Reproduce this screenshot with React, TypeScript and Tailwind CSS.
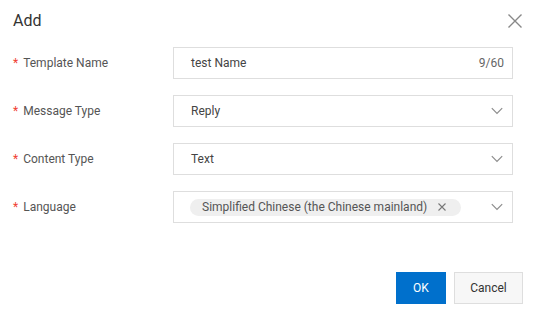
const font = { fontFamily: "Roboto, 'Liberation Sans', sans-serif" };

function Chevron() {
  return (
    <svg width="12" height="8" viewBox="0 0 12 8" className="text-[#8c8c8c]">
      <path d="M0.8 1.2 L6 6.4 L11.2 1.2" fill="none" stroke="currentColor" strokeWidth="1.2" />
    </svg>
  );
}

function Cross({ size, stroke, color }: { size: number; stroke: number; color: string }) {
  return (
    <svg width={size} height={size} viewBox={`0 0 ${size} ${size}`} style={{ color }}>
      <path d={`M0.5 0.5 L${size - 0.5} ${size - 0.5} M${size - 0.5} 0.5 L0.5 ${size - 0.5}`} stroke="currentColor" strokeWidth={stroke} fill="none" />
    </svg>
  );
}

function Label({ text }: { text: string }) {
  return (
    <div className="flex w-[173px] items-center pl-[13px] text-[12px] text-[#555555]">
      <span className="mr-[5px] text-[#f04134]">*</span>
      {text}
    </div>
  );
}

function Select({ children }: { children: React.ReactNode }) {
  return (
    <div className="flex h-[32px] w-[340px] items-center border border-[#dedede] bg-white pl-[17px] pr-[9px] text-[12px] text-[#444444]">
      <div className="flex flex-1 items-center">{children}</div>
      <Chevron />
    </div>
  );
}

export default function App() {
  return (
    <div className="h-[313px] w-[540px] bg-white" style={font}>
      <div className="flex items-center justify-between pl-[13px] pr-[18px] pt-[9px]">
        <h2 className="text-[16px] font-normal text-[#333333]">Add</h2>
        <Cross size={14} stroke={1.4} color="#888888" />
      </div>
      <div className="mt-[14px] flex flex-col gap-[16px]">
        <div className="flex items-center">
          <Label text="Template Name" />
          <div className="flex h-[32px] w-[340px] items-center border border-[#dedede] bg-white pl-[17px] pr-[8px] text-[12px] text-[#444444]">
            <span className="flex-1">test Name</span>
            <span className="text-[#666666]">9/60</span>
          </div>
        </div>
        <div className="flex items-center">
          <Label text="Message Type" />
          <Select>Reply</Select>
        </div>
        <div className="flex items-center">
          <Label text="Content Type" />
          <Select>Text</Select>
        </div>
        <div className="flex items-center">
          <Label text="Language" />
          <div className="flex h-[32px] w-[340px] items-center border border-[#dedede] bg-white pl-[16px] pr-[9px] text-[12px] text-[#555555]">
            <div className="flex flex-1 items-center">
              <span className="flex h-[17px] items-center rounded-full bg-[#efefef] pl-[12px] pr-[15px]">
                Simplified Chinese (the Chinese mainland)
                <span className="ml-[11px] flex">
                  <Cross size={8} stroke={1.1} color="#777777" />
                </span>
              </span>
            </div>
            <Chevron />
          </div>
        </div>
      </div>
      <div className="mt-[49px] flex justify-end gap-[8px] pr-[17px]">
        <button className="h-[32px] w-[50px] bg-[#0070cc] text-[12px] text-white">OK</button>
        <button className="h-[32px] w-[69px] border border-[#dedede] bg-[#f7f7f7] text-[12px] text-[#333333]">Cancel</button>
      </div>
    </div>
  );
}
